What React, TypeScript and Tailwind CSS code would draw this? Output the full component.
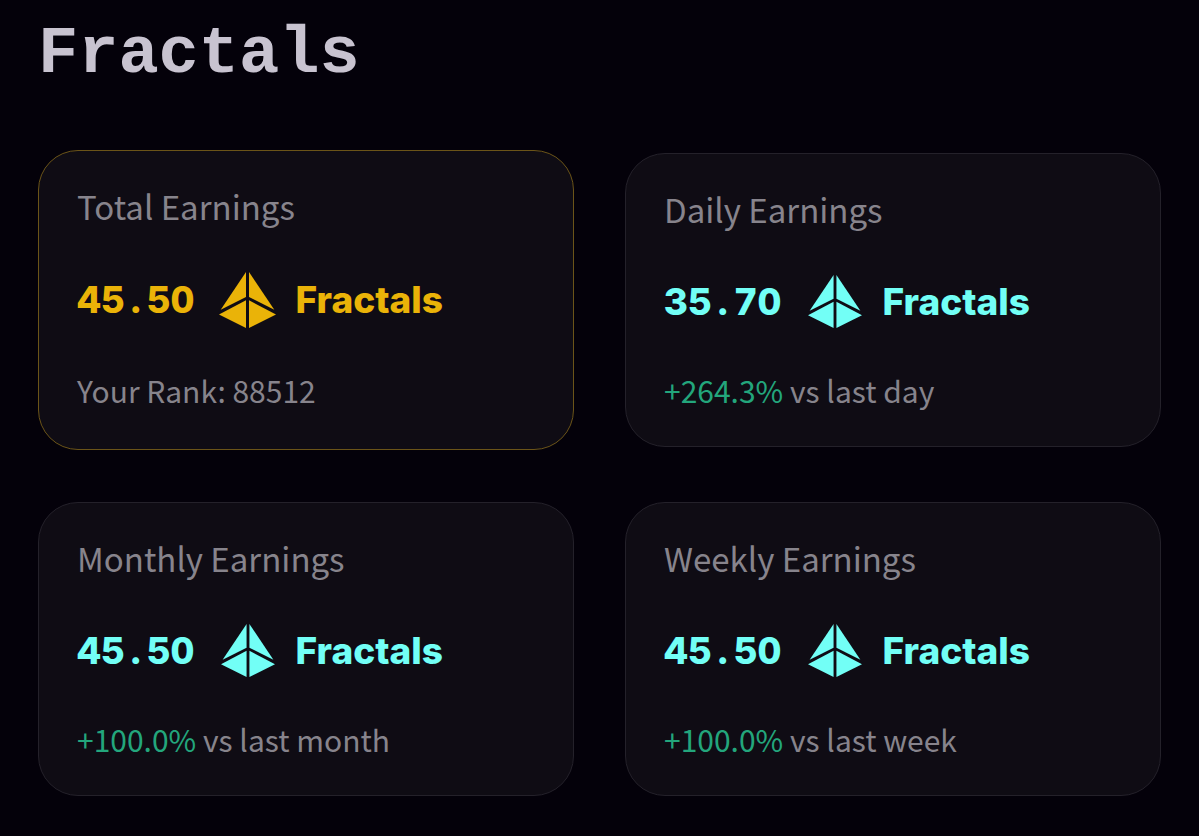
import React from 'react'
import clsx from 'clsx'

type Earning = {
  title: string
  amount: string
  change?: string
  note: string
  highlight?: boolean
}

const earnings: Earning[] = [
  { title: 'Total Earnings', amount: '45.50', note: 'Your Rank: 88512', highlight: true },
  { title: 'Daily Earnings', amount: '35.70', change: '+264.3%', note: 'vs last day' },
  { title: 'Monthly Earnings', amount: '45.50', change: '+100.0%', note: 'vs last month' },
  { title: 'Weekly Earnings', amount: '45.50', change: '+100.0%', note: 'vs last week' },
]

function FractalIcon({ className }: { className?: string }) {
  return (
    <svg viewBox="0 0 57 57" fill="currentColor" className={className} aria-hidden="true">
      <path d="M27 0V25L1.700 37.700Z" />
      <path d="M30 0V25L55.300 37.700Z" />
      <path d="M27 28.300V56L0 42.500Z" />
      <path d="M30 28.300V56L57 42.500Z" />
    </svg>
  )
}

function EarningCard({ title, amount, change, note, highlight }: Earning) {
  const [whole, cents] = amount.split('.')

  return (
    <section
      className={clsx(
        'flex flex-col gap-10 rounded-[40px] border bg-[#0f0c14] px-[38px] pt-[31px]',
        highlight ? 'border-[#6b5418] pb-[39px]' : 'border-[#24212a] pb-9'
      )}
    >
      <h2 className="text-[33px] leading-[48px] text-[#87848c]">{title}</h2>
      <div
        className={clsx(
          'flex items-center font-[Inter,sans-serif] text-[37px] leading-[54px] font-extrabold',
          highlight ? 'h-[60px] text-[#eab308]' : 'h-[57px] text-[#72fff6]'
        )}
      >
        <span className="tabular-nums">
          {whole}
          <span className="mx-1.5">.</span>
          {cents}
        </span>
        <span className="mr-[18px] ml-[23px] flex w-[60px] justify-center">
          <FractalIcon className={highlight ? 'size-[57px]' : 'size-[54px]'} />
        </span>
        <span>Fractals</span>
      </div>
      <p className="text-[30px] leading-[40px] text-[#87848c]">
        {change && <span className="text-[#23a67c]">{change} </span>}
        {note}
      </p>
    </section>
  )
}

export default function App() {
  return (
    <main className="min-h-screen bg-[#04010a] px-[38px] pt-[14px] pb-10 font-['Noto_Sans_CJK_SC',sans-serif]">
      <h1 className="font-['Liberation_Mono',monospace] text-[67px] leading-[80px] font-bold text-[#c8c3d0]">
        Fractals
      </h1>
      <div className="mt-14 grid grid-cols-2 items-center gap-x-[51px] gap-y-[52px]">
        {earnings.map((item) => (
          <EarningCard key={item.title} {...item} />
        ))}
      </div>
    </main>
  )
}
